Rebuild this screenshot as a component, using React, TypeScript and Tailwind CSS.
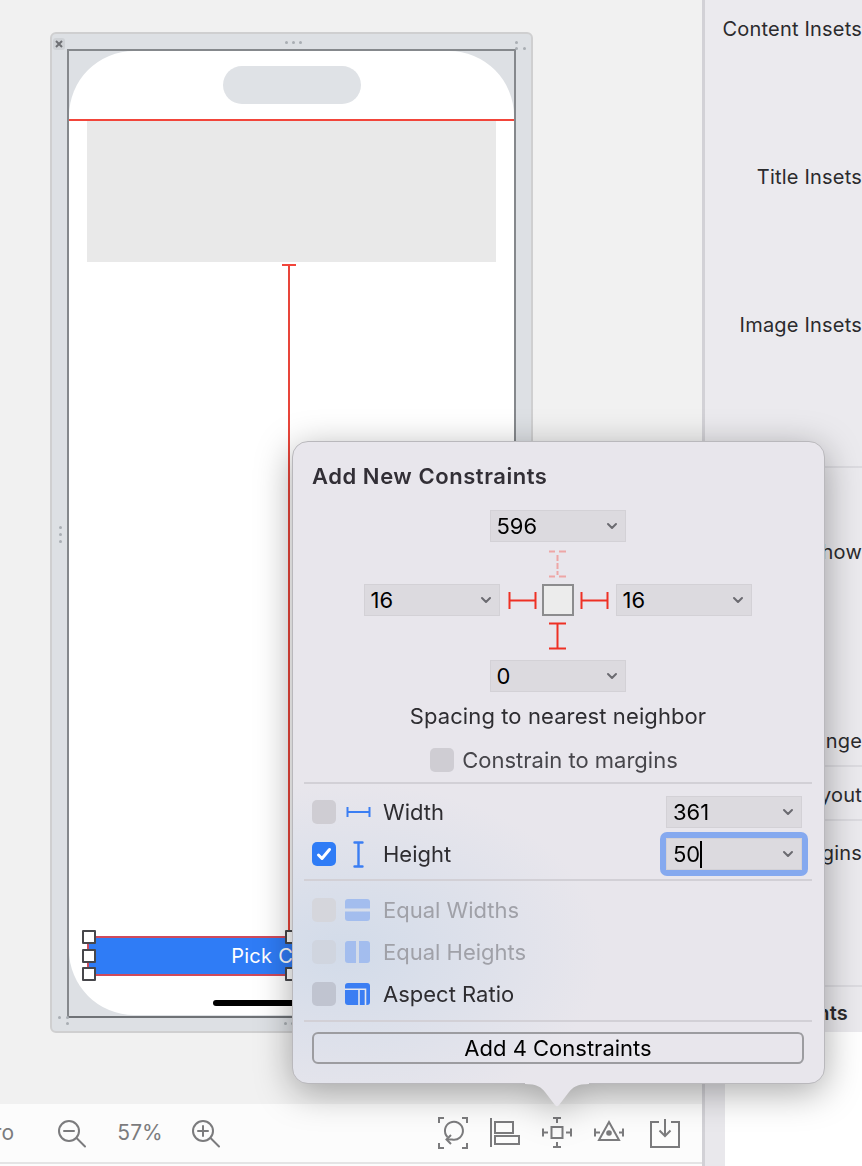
const grip = 'w-[3px] h-[3px] rounded-full bg-[#a9adb3]';

function Dots({ className }: { className: string }) {
  return (
    <div className={`absolute flex gap-[4px] ${className}`}>
      <span className={grip} />
      <span className={grip} />
      <span className={grip} />
    </div>
  );
}

function CornerDots({ className, flip }: { className: string; flip?: boolean }) {
  return (
    <div className={`absolute grid grid-cols-2 gap-x-[5px] gap-y-[3px] ${className}`}>
      <span className={grip} />
      {flip ? <span /> : <span className={grip} />}
      {flip ? <span className={grip} /> : <span />}
      <span className={grip} />
    </div>
  );
}

function Handle({ className }: { className: string }) {
  return <div className={`absolute w-[14px] h-[14px] bg-white border-2 border-[#47474b] rounded-[1px] ${className}`} />;
}

function Chevron() {
  return (
    <svg width="12" height="8" viewBox="0 0 12 8" fill="none" stroke="#6b6a70" strokeWidth="2" strokeLinecap="round" strokeLinejoin="round">
      <path d="M2 2 L6 6 L10 2" />
    </svg>
  );
}

function Field({ value, caret }: { value: string; caret?: boolean }) {
  return (
    <div className="w-[136px] h-[32px] flex items-center justify-between pl-[6px] pr-[7px] bg-[#dcdadf] border border-[#d3d1d6] text-[22px] text-black">
      <span className="flex items-center pt-[1px]">
        {value}
        {caret && <span className="w-[2px] h-[27px] bg-black" />}
      </span>
      <Chevron />
    </div>
  );
}

function Beam({ vertical, dashed }: { vertical?: boolean; dashed?: boolean }) {
  if (vertical) {
    return (
      <svg width="19" height="28" viewBox="0 0 19 28" fill="none" stroke={dashed ? '#eda6a6' : '#ee3024'} strokeWidth="2">
        {dashed ? (
          <path d="M1 1.5 H7 M11 1.5 H18 M9.5 5 V11 M9.5 13 V19 M9.5 21 V25 M1 26.5 H7 M11 26.5 H18" />
        ) : (
          <path d="M1 1.5 H18 M9.5 1.5 V26.5 M1 26.5 H18" />
        )}
      </svg>
    );
  }
  return (
    <svg width="29" height="19" viewBox="0 0 29 19" fill="none" stroke="#ee3024" strokeWidth="2">
      <path d="M1.5 1 V18 M1.5 9.5 H27.5 M27.5 1 V18" />
    </svg>
  );
}

function Box({ tone = 'bg-[#cfcdd3]' }: { tone?: string }) {
  return <div className={`w-[24px] h-[24px] rounded-[5px] shrink-0 ${tone}`} />;
}

function WidthIcon() {
  return (
    <svg width="25" height="12" viewBox="0 0 25 12" fill="none" stroke="#3b7ef3" strokeWidth="2">
      <path d="M1.5 1 V11 M1.5 6 H23.5 M23.5 1 V11" />
    </svg>
  );
}

function HeightIcon() {
  return (
    <svg width="25" height="27" viewBox="0 0 25 27" fill="none" stroke="#3b7ef3" strokeWidth="2.4" strokeLinecap="round">
      <path d="M8.5 1.5 H16.5 M12.5 1.5 V25.5 M8.5 25.5 H16.5" />
    </svg>
  );
}

function EqualWidths() {
  return (
    <svg width="25" height="22" viewBox="0 0 25 22" fill="#a3bdee">
      <path d="M3 0 H22 a3 3 0 0 1 3 3 V9.5 H0 V3 a3 3 0 0 1 3 -3 Z" />
      <path d="M0 12.5 H25 V19 a3 3 0 0 1 -3 3 H3 a3 3 0 0 1 -3 -3 Z" />
    </svg>
  );
}

function EqualHeights() {
  return (
    <svg width="25" height="22" viewBox="0 0 25 22" fill="#a3bdee">
      <path d="M3 0 H11 V22 H3 a3 3 0 0 1 -3 -3 V3 a3 3 0 0 1 3 -3 Z" />
      <path d="M14 0 H22 a3 3 0 0 1 3 3 V19 a3 3 0 0 1 -3 3 H14 Z" />
    </svg>
  );
}

function AspectIcon() {
  return (
    <svg width="25" height="22" viewBox="0 0 25 22">
      <rect width="25" height="22" rx="3" fill="#3b7ef3" />
      <path d="M0 6.2 H20.5 V22 M14 6.2 V22" fill="none" stroke="#e4e6ee" strokeWidth="1.6" />
    </svg>
  );
}

function CheckOn() {
  return (
    <div className="w-[24px] h-[24px] rounded-[5px] shrink-0 bg-[#2f7cf6] flex items-center justify-center">
      <svg width="16" height="14" viewBox="0 0 16 14" fill="none" stroke="white" strokeWidth="3" strokeLinecap="round" strokeLinejoin="round">
        <path d="M2.5 8 L6 11.5 L13.5 2.5" />
      </svg>
    </div>
  );
}

function ToolIcon({ children }: { children: React.ReactNode }) {
  return (
    <svg width="30" height="32" viewBox="0 0 30 32" fill="none" stroke="#7b7b7d" strokeWidth="2">
      {children}
    </svg>
  );
}

function Scene() {
  return (
    <div className="relative w-[483px] h-[1001px] pt-[15px] px-[15px] pb-[13px] bg-[#dde0e4] border-2 border-[#cfcfd0] rounded-[6px]">
      <div className="absolute left-[1px] top-[4px] w-[12px] h-[12px] rounded-[3px] bg-[#cfd2d6] flex items-center justify-center">
        <svg width="8" height="8" viewBox="0 0 8 8" stroke="#6e7074" strokeWidth="2">
          <path d="M1 1 L7 7 M7 1 L1 7" />
        </svg>
      </div>
      <Dots className="left-[233px] top-[7px]" />
      <CornerDots className="left-[463px] top-[7px]" flip />
      <Dots className="left-[7px] top-[492px] w-[3px] flex-col" />
      <CornerDots className="left-[6px] top-[982px]" />
      <Dots className="left-[232px] top-[988px]" />
      <div className="h-full flex flex-col border-2 border-[#85888c] border-b-[#6f7276]">
        <div className="flex-1 mb-[1px] flex flex-col bg-white rounded-[65px]">
          <div className="mt-[15px] mx-auto w-[138px] h-[38px] rounded-full bg-[#dfe2e6]" />
          <div className="mt-[15px] h-[2px] bg-[#f2453a]" />
          <div className="mx-[18px] h-[141px] bg-[#e9e9e9]" />
          <div className="flex-1 mt-[2px] flex flex-col items-center pr-[6px]">
            <div className="w-[14px] h-[2px] bg-[#f2453a]" />
            <div className="flex-1 w-[2px] bg-[#e8453a]" />
          </div>
          <div className="relative mx-[18px] h-[40px] flex items-center justify-center bg-[#2f7cf6] border-y-2 border-l-2 border-[#cf4a5b] text-white text-[20px] tracking-[0.3px]">
            Pick Camera
            <Handle className="-left-[7px] -top-[8px]" />
            <Handle className="-left-[7px] top-[11px]" />
            <Handle className="-left-[7px] top-[29px]" />
            <Handle className="left-[196px] -top-[8px]" />
            <Handle className="left-[196px] top-[29px]" />
          </div>
          <div className="mt-[24px] mb-[9px] mx-auto w-[158px] h-[6px] rounded-full bg-black" />
        </div>
      </div>
    </div>
  );
}

function Toolbar() {
  return (
    <div className="h-[58px] flex items-center bg-[#fcfcfc] text-[#7b7b7d] text-[21px] overflow-hidden">
      <span className="-ml-[12px] w-[26px] text-right">ro</span>
      <div className="ml-[43px]">
        <ToolIcon>
          <circle cx="12" cy="14" r="10" />
          <path d="M7 14 H17 M19.5 21 L28 29.5" strokeLinecap="round" />
        </ToolIcon>
      </div>
      <span className="ml-[15px] w-[76px] text-center">57%</span>
      <div className="ml-[13px]">
        <ToolIcon>
          <circle cx="12" cy="14" r="10" />
          <path d="M7 14 H17 M12 9 V19 M19.5 21 L28 29.5" strokeLinecap="round" />
        </ToolIcon>
      </div>
      <div className="ml-[217px]">
        <ToolIcon>
          <path d="M1 6 V1 H6 M24 1 H29 V6 M1 26 V31 H6 M24 31 H29 V26" />
          <path d="M9.5 20 A9 9 0 1 1 14 22.5 H9" />
          <path d="M13 18 L8.5 22.5 L13 27" />
        </ToolIcon>
      </div>
      <div className="ml-[22px]">
        <ToolIcon>
          <path d="M1 1 V30" />
          <rect x="5" y="5" width="18" height="11" />
          <rect x="5" y="19" width="24" height="8" />
        </ToolIcon>
      </div>
      <div className="ml-[22px]">
        <ToolIcon>
          <rect x="9.5" y="10" width="11" height="11" />
          <path d="M11 1 H19 M15 1 V6 M11 30 H19 M15 30 V25 M1 11.5 V19.5 M1 15.5 H6 M29 11.5 V19.5 M29 15.5 H24" />
        </ToolIcon>
      </div>
      <div className="ml-[22px]">
        <ToolIcon>
          <path d="M15 5 L25 23 H5 Z" />
          <circle cx="15" cy="16" r="2.8" fill="#7b7b7d" stroke="none" />
          <path d="M1 11.5 V19.5 M1 15.5 H6 M29 11.5 V19.5 M29 15.5 H25" />
        </ToolIcon>
      </div>
      <div className="ml-[26px]">
        <ToolIcon>
          <path d="M9 5 H1 V30 H29 V5 H21" />
          <path d="M15 2 V19 M9.5 13.5 L15 19 L20.5 13.5" />
        </ToolIcon>
      </div>
    </div>
  );
}

function Inspector() {
  const label = 'text-right whitespace-nowrap text-[20px] tracking-[0.2px] leading-[28px] text-[#2b2b2d]';
  const line = 'h-[2px] bg-[#dcdbe0]';
  return (
    <div className="flex-1 flex flex-col border-l-[3px] border-[#d2d1d6] bg-white overflow-hidden">
      <div className="h-[1032px] flex flex-col bg-[#ebeaee] overflow-hidden">
        <div className="h-[466px] pt-[15px]">
          <div className={`h-[148px] ${label}`}>Content Insets</div>
          <div className={`h-[148px] ${label}`}>Title Insets</div>
          <div className={`h-[148px] ${label}`}>Image Insets</div>
        </div>
        <div className={line} />
        <div className={`mt-[70px] ${label}`}>Show</div>
        <div className={`mt-[161px] ${label}`}>Change</div>
        <div className={`mt-[10px] ${line}`} />
        <div className={`mt-[14px] ${label}`}>Layout</div>
        <div className={`mt-[10px] ${line}`} />
        <div className={`mt-[18px] ${label}`}>Layout Margins</div>
        <div className={`mt-[118px] ${line}`} />
        <div className={`mt-[12px] pr-[14px] font-semibold ${label}`}>Constraints</div>
      </div>
      <div className="flex-1 w-[20px] bg-[#e9e8ec]" />
    </div>
  );
}

function Popover() {
  const divider = 'ml-[11px] mr-[12px] h-[2px] bg-[#d2d0d6]';
  const row = 'mx-[19px] flex items-center';
  return (
    <div className="absolute left-[292px] top-[441px] w-[533px] drop-shadow-[0_8px_18px_rgba(0,0,0,0.34)]">
      <div className="h-[643px] flex flex-col rounded-[16px] border border-[#b9b8bc] bg-[radial-gradient(ellipse_260px_170px_at_50px_510px,#d2dbe9,#e8e6ec)] text-[#2e2d31] text-[22px]">
        <div className="mt-[20px] mx-[19px] h-[28px] text-[22px] tracking-[0.55px] leading-[28px] font-semibold text-[#322f36]">Add New Constraints</div>
        <div className="mt-[20px] pr-[2px] flex flex-col items-center">
          <Field value="596" />
          <div className="mt-[8px] h-[28px]">
            <Beam vertical dashed />
          </div>
          <div className="mt-[6px] flex items-center">
            <Field value="16" />
            <div className="ml-[8px] flex">
              <Beam />
            </div>
            <div className="ml-[5px] w-[32px] h-[32px] bg-[#ececec] border-2 border-[#8c8c8e]" />
            <div className="ml-[6px] flex">
              <Beam />
            </div>
            <div className="ml-[7px]">
              <Field value="16" />
            </div>
          </div>
          <div className="mt-[6px] h-[28px]">
            <Beam vertical />
          </div>
          <div className="mt-[10px]">
            <Field value="0" />
          </div>
          <div className="mt-[10px] h-[28px] leading-[28px] tracking-[0.1px] pl-[1px]">Spacing to nearest neighbor</div>
          <div className="mt-[18px] pr-[7px] flex items-center gap-[8px] text-[#47464b]">
            <Box />
            <span className="leading-[24px]">Constrain to margins</span>
          </div>
        </div>
        <div className={`mt-[10px] ${divider}`} />
        <div className={`mt-[12px] h-[32px] ${row}`}>
          <Box />
          <div className="ml-[10px] w-[25px] flex">
            <WidthIcon />
          </div>
          <span className="ml-[12px]">Width</span>
          <div className="ml-auto mr-[3px]">
            <Field value="361" />
          </div>
        </div>
        <div className={`mt-[10px] h-[32px] ${row}`}>
          <CheckOn />
          <div className="ml-[10px] w-[25px] flex">
            <HeightIcon />
          </div>
          <span className="ml-[12px]">Height</span>
          <div className="ml-auto mr-[-3px] -my-[6px] p-[6px] rounded-[7px] bg-[#85a9ef]">
            <Field value="50" caret />
          </div>
        </div>
        <div className={`mt-[9px] ${divider}`} />
        <div className={`mt-[17px] h-[24px] ${row} text-[#a0a1a8]`}>
          <Box tone="bg-[#d5d6dc]" />
          <div className="ml-[9px] flex">
            <EqualWidths />
          </div>
          <span className="ml-[13px]">Equal Widths</span>
        </div>
        <div className={`mt-[18px] h-[24px] ${row} text-[#a0a1a8]`}>
          <Box tone="bg-[#d0d5df]" />
          <div className="ml-[9px] flex">
            <EqualHeights />
          </div>
          <span className="ml-[13px]">Equal Heights</span>
        </div>
        <div className={`mt-[18px] h-[24px] ${row}`}>
          <Box tone="bg-[#c0c4d0]" />
          <div className="ml-[9px] flex">
            <AspectIcon />
          </div>
          <span className="ml-[13px]">Aspect Ratio</span>
        </div>
        <div className={`mt-[14px] ${divider}`} />
        <div className="mt-[10px] ml-[19px] mr-[20px] h-[32px] flex items-center justify-center rounded-[6px] border-2 border-[#9c9ca0] text-black">
          Add 4 Constraints
        </div>
      </div>
      <svg className="absolute left-[233px] top-[642px]" width="64" height="26" viewBox="0 0 64 26" fill="#e8e6ec">
        <path d="M0 1 C12 1 16 4 20 9 L30 22 Q32 24.5 34 22 L44 9 C48 4 52 1 64 1 V0 H0 Z" />
      </svg>
    </div>
  );
}

export default function App() {
  return (
    <div className="relative w-[862px] h-[1166px] flex overflow-hidden bg-white font-['Inter',sans-serif]">
      <div className="w-[702px] flex flex-col bg-[#fcfcfc]">
        <div className="h-[1104px] pl-[50px] pt-[32px] bg-[#f1f1f1]">
          <Scene />
        </div>
        <Toolbar />
        <div className="h-[2px] bg-[#e4e4e5]" />
      </div>
      <Inspector />
      <Popover />
    </div>
  );
}
